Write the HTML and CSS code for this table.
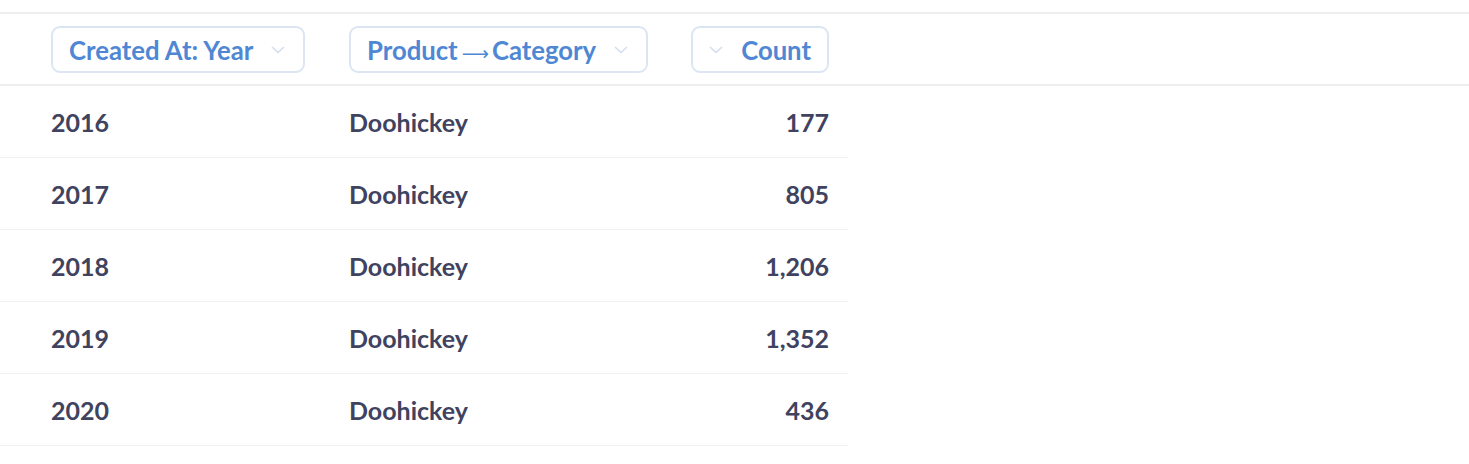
FILE: index.html
```html
<!DOCTYPE html>
<html lang="en">
<head>
    <meta charset="UTF-8">
    <title>Table</title>
    <link rel="stylesheet" href="styles.css">
</head>
<body>
    <div class="table">
        <div class="head">
            <div class="cell first">
                <span class="pill">Created At: Year <svg class="chev" viewBox="0 0 14 8"><path d="M1 1l6 5.5L13 1"/></svg></span>
            </div>
            <div class="cell">
                <span class="pill"><span>Product<span class="arrow">&#10230;</span>Category</span> <svg class="chev" viewBox="0 0 14 8"><path d="M1 1l6 5.5L13 1"/></svg></span>
            </div>
            <div class="cell num">
                <span class="pill count"><svg class="chev left" viewBox="0 0 14 8"><path d="M1 1l6 5.5L13 1"/></svg> Count</span>
            </div>
        </div>

        <div class="body">
            <div class="row"><div class="cell first">2016</div><div class="cell">Doohickey</div><div class="cell num">177</div></div>
            <div class="row"><div class="cell first">2017</div><div class="cell">Doohickey</div><div class="cell num">805</div></div>
            <div class="row"><div class="cell first">2018</div><div class="cell">Doohickey</div><div class="cell num">1,206</div></div>
            <div class="row"><div class="cell first">2019</div><div class="cell">Doohickey</div><div class="cell num">1,352</div></div>
            <div class="row"><div class="cell first">2020</div><div class="cell">Doohickey</div><div class="cell num">436</div></div>
        </div>
    </div>
</body>
</html>
```

FILE: styles.css
```css
/* Page */
body {
    margin: 0;
    padding-top: 12px;
    background-color: white;
    font-family: Lato, "Noto Sans", sans-serif;
    font-weight: 700;
    color: #3f4360;
}

.table {
    border-top: 2px solid #eeeeee;
}

/* Header row with column pills */
.head {
    display: grid;
    grid-template-columns: 330px 342px 176px;
    align-items: center;
    height: 70px;
    border-bottom: 2px solid #eeeeee;
}

.pill {
    display: inline-flex;
    align-items: center;
    gap: 18px;
    box-sizing: border-box;
    height: 47px;
    padding: 2px 18px 0 16px;
    border: 2px solid #dbe5f3;
    border-radius: 9px;
    color: #4f87d4;
    font-size: 25.7px;
    white-space: nowrap;
}

.pill.count {
    padding: 2px 16px 0 16px;
}

.arrow {
    margin: 0 3px 0 4px;
    font-family: "DejaVu Sans", sans-serif;
    font-weight: 400;
    font-size: 19px;
}

.chev {
    width: 14px;
    height: 8px;
    fill: none;
    stroke: #d3deee;
    stroke-width: 1.6;
}

/* Data rows */
.body {
    width: 848px;
}

.row {
    display: grid;
    grid-template-columns: 330px 342px 176px;
    align-items: center;
    height: 71px;
    border-bottom: 1px solid #f1f1f1;
    font-size: 25px;
}

.cell {
    padding: 0 19px;
}

.cell.first {
    padding-left: 51px;
}

.cell.num {
    text-align: right;
}
```
